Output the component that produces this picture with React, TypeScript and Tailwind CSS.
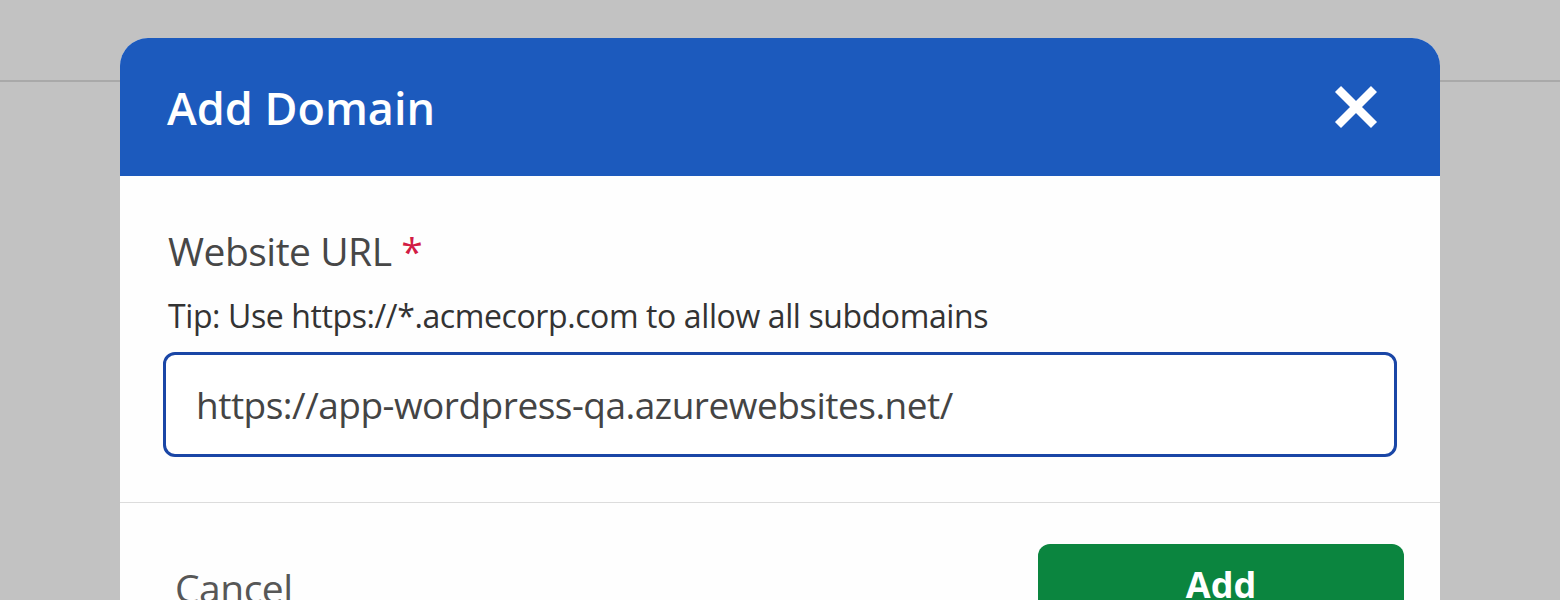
export default function App() {
  return (
    <div className="relative h-[600px] w-[1560px] overflow-hidden bg-[#c2c2c2] font-['Open_Sans',sans-serif]">
      {/* page behind the overlay */}
      <div className="h-[82px] border-b-2 border-[#a9a9a9]" />

      {/* Add Domain dialog */}
      <div className="absolute left-[120px] top-[38px] w-[1320px] overflow-hidden rounded-t-[28px] bg-[#fefefe]">
        <div className="flex h-[138px] items-center justify-between bg-[#1c5abd] pl-[47px] pr-[60px]">
          <h2 className="text-[45px] font-semibold leading-[61px] text-white">Add Domain</h2>
          <button className="text-white">
            <svg width="48" height="48" viewBox="0 0 48 48" fill="none" stroke="currentColor" strokeWidth="8.5">
              <path d="M6 6 L42 42 M42 6 L6 42" />
            </svg>
          </button>
        </div>

        <div className="px-[43px] pb-[45px] pt-[48px]">
          <label className="ml-[5px] block text-[39px] leading-[53px] tracking-[-0.5px] text-[#474747]">
            Website URL <span className="text-[#d21c44]">*</span>
          </label>
          <p className="ml-[5px] mt-[17px] text-[32px] leading-[44px] tracking-[-0.4px] text-[#333]">
            Tip: Use https://*.acmecorp.com to allow all subdomains
          </p>
          <input
            readOnly
            value="https://app-wordpress-qa.azurewebsites.net/"
            className="mt-[14px] block h-[105px] w-[1234px] rounded-[12px] border-[3px] border-[#1a46a6] bg-white px-[30px] text-[37px] tracking-[-0.5px] text-[#444] outline-none"
          />
        </div>

        <div className="flex items-start justify-between border-t border-[#dcdcdc] pl-[55px] pr-[36px] pt-[41px]">
          <button className="mt-[17px] text-[39px] leading-[53px] tracking-[-0.5px] text-[#575757]">Cancel</button>
          <button className="h-[82px] w-[366px] rounded-[12px] bg-[#0b853f] text-[36px] font-bold text-white">
            Add
          </button>
        </div>
      </div>
    </div>
  );
}
